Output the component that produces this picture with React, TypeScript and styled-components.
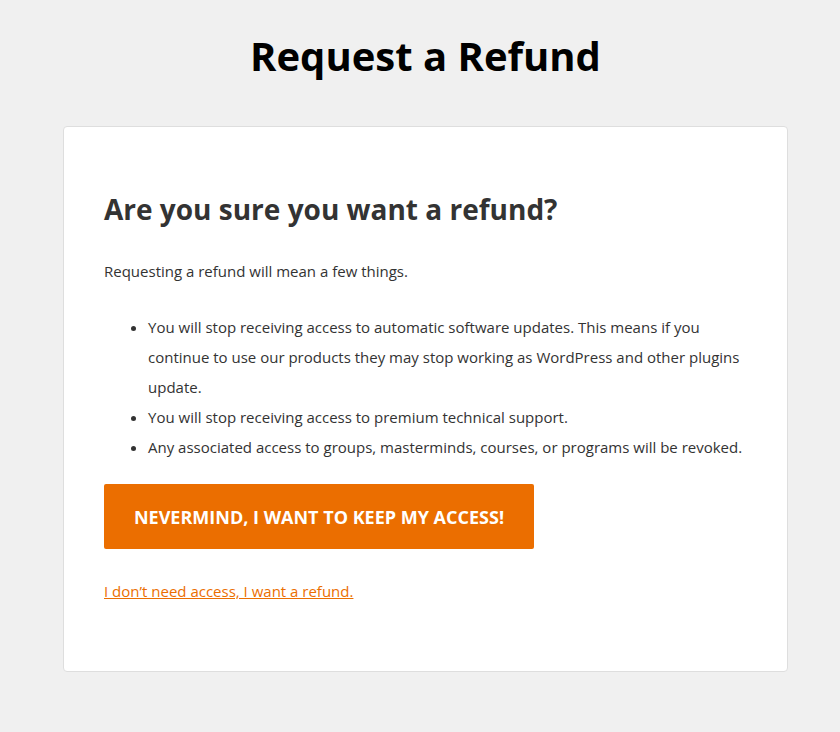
import React from "react";
import styled, { createGlobalStyle } from "styled-components";

const Global = createGlobalStyle`
  html, body { margin: 0; padding: 0; background: #f0f0f0; }
  body { font-family: "Open Sans", "Liberation Sans", sans-serif; color: #333; }
`;

const Page = styled.div`
  padding: 26px 52px 60px 63px;
`;

const Title = styled.h1`
  margin: 0 0 40px;
  text-align: center;
  font-size: 40px;
  line-height: 60px;
  font-weight: 700;
  color: #000;
`;

const Card = styled.div`
  background: #fff;
  border: 1px solid #dedede;
  border-radius: 4px;
  padding: 62px 40px 69px;
`;

const Heading = styled.h2`
  margin: 0 0 31px;
  font-size: 28px;
  line-height: 40px;
  font-weight: 700;
  color: #333;
`;

const Text = styled.p`
  margin: 0 0 30px;
  font-size: 15px;
  line-height: 22px;
`;

const List = styled.ul`
  margin: 0 0 22px;
  padding-left: 44px;
  font-size: 15px;
  line-height: 30px;
`;

const Button = styled.button`
  display: block;
  width: 430px;
  height: 65px;
  border: 0;
  border-radius: 2px;
  background: #eb6e00;
  color: #fff;
  font-family: inherit;
  font-size: 18px;
  font-weight: 700;
  text-transform: uppercase;
  cursor: pointer;
  margin-bottom: 31px;
`;

const Link = styled.a`
  font-size: 15px;
  line-height: 22px;
  color: #eb6e00;
  text-decoration: underline;
`;

export default function App() {
  return (
    <>
      <Global />
      <Page>
        <Title>Request a Refund</Title>
        <Card>
          <Heading>Are you sure you want a refund?</Heading>
          <Text>Requesting a refund will mean a few things.</Text>
          <List>
            <li>
              You will stop receiving access to automatic software updates. This means if you
              continue to use our products they may stop working as WordPress and other plugins
              update.
            </li>
            <li>You will stop receiving access to premium technical support.</li>
            <li>
              Any associated access to groups, masterminds, courses, or programs will be revoked.
            </li>
          </List>
          <Button>Nevermind, I want to keep my access!</Button>
          <Link href="#">I don’t need access, I want a refund.</Link>
        </Card>
      </Page>
    </>
  );
}
